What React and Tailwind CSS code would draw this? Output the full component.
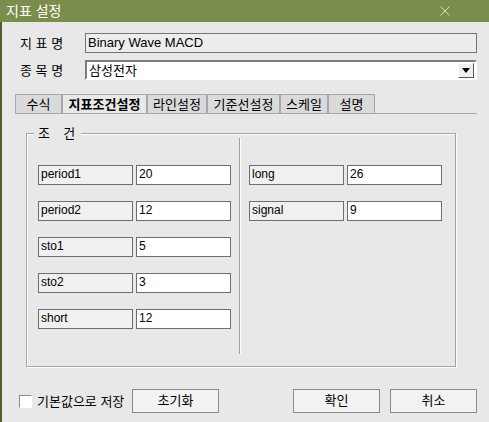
import React from "react";

const LEFT_FIELDS = [
  ["period1", "20"],
  ["period2", "12"],
  ["sto1", "5"],
  ["sto2", "3"],
  ["short", "12"],
];

const RIGHT_FIELDS = [
  ["long", "26"],
  ["signal", "9"],
];

const TABS = [
  { label: "수식", w: "w-[47px]" },
  { label: "지표조건설정", w: "w-[85px]", active: true },
  { label: "라인설정", w: "w-[60px]" },
  { label: "기준선설정", w: "w-[73px]" },
  { label: "스케일", w: "w-[48px]" },
  { label: "설명", w: "w-[47px]" },
];

function Field({ label, value }) {
  return (
    <div className="flex h-[20px] gap-[3px]">
      <div className="h-full w-[95px] border border-[#6e6e6e] bg-[#f0f0f0] px-[2px] text-[12px] leading-[17px] text-black">
        {label}
      </div>
      <div className="h-full w-[95px] border border-[#6e6e6e] bg-white px-[2px] text-[12px] leading-[17px] text-black">
        {value}
      </div>
    </div>
  );
}

function Button({ children, className = "" }) {
  return (
    <button
      className={`h-[24px] w-[87px] border border-[#8a8a8a] bg-[#f2f2f2] text-[13px] text-black ${className}`}
    >
      {children}
    </button>
  );
}

export default function App() {
  return (
    <div className="flex h-[422px] w-[489px] flex-col overflow-hidden bg-[#e8e8e8] font-['Liberation_Sans','Noto_Sans_CJK_KR',sans-serif] text-black">
      {/* title bar */}
      <div className="flex h-[22px] shrink-0 items-center justify-between bg-[#7a8d4b] pl-[6px] pr-[39px]">
        <span className="text-[14px] leading-none text-white">지표 설정</span>
        <svg width="10" height="10" viewBox="0 0 10 10">
          <path d="M0.5 0.5 L9.5 9.5 M9.5 0.5 L0.5 9.5" stroke="#d8dfc8" strokeWidth="1" />
        </svg>
      </div>

      <div className="flex flex-1 flex-col border-l-2 border-[#4e5f2a]">
        {/* 지표명 */}
        <div className="mt-[11px] flex h-[20px] items-center">
          <div className="w-[83px] pl-[18px] text-[13px] leading-none">지 표 명</div>
          <div className="h-full w-[392px] border border-[#747474] bg-[#ededed] px-[2px] text-[13px] leading-[17px]">
            Binary Wave MACD
          </div>
        </div>

        {/* 종목명 */}
        <div className="mt-[7px] flex h-[20px] items-center">
          <div className="w-[83px] pl-[18px] text-[13px] leading-none">종 목 명</div>
          <div className="flex h-full w-[392px] items-center justify-between border-2 border-t-[#7c7c7c] border-l-[#7c7c7c] border-r-[#ffffff] border-b-[#ffffff] bg-white pl-[2px] pr-[1px]">
            <span className="text-[13px] leading-none">삼성전자</span>
            <div className="flex h-[15px] w-[16px] items-center justify-center border border-t-[#fff] border-l-[#fff] border-r-[#555] border-b-[#555] bg-[#f0f0f0]">
              <svg width="8" height="5" viewBox="0 0 8 5">
                <path d="M0 0 H8 L4 5 Z" fill="#000" />
              </svg>
            </div>
          </div>
        </div>

        {/* tabs */}
        <div className="ml-[13px] mt-[14px] flex w-[462px] border-b border-[#a8a8a8]">
          {TABS.map((t) => (
            <div
              key={t.label}
              className={`flex h-[19px] items-center justify-center border-l border-r border-t border-[#a8a8a8] text-[13px] leading-none ${t.w} ${
                t.active ? "bg-[#e8e8e8] font-bold" : "bg-[#dadada]"
              }`}
            >
              {t.label}
            </div>
          ))}
        </div>

        {/* group box */}
        <div className="relative ml-[24px] mt-[19px] flex h-[234px] w-[430px] border border-[#a4a4a4] shadow-[inset_1px_1px_0_#fff,1px_1px_0_#fff]">
          <div className="absolute left-[7px] top-[-8px] whitespace-pre bg-[#e8e8e8] px-[4px] text-[13px] leading-[15px] tracking-[2px]">
            조  건
          </div>
          <div className="ml-[11px] flex flex-col gap-[16px] pt-[31px]">
            {LEFT_FIELDS.map(([l, v]) => (
              <Field key={l} label={l} value={v} />
            ))}
          </div>
          <div className="ml-[8px] mt-[4px] h-[216px] w-[2px] border-l border-r border-l-[#a0a0a0] border-r-white" />
          <div className="ml-[8px] flex flex-col gap-[16px] pt-[31px]">
            {RIGHT_FIELDS.map(([l, v]) => (
              <Field key={l} label={l} value={v} />
            ))}
          </div>
        </div>

        {/* bottom row */}
        <div className="mt-[22px] flex h-[24px] items-center">
          <div className="flex w-[130px] items-center pl-[17px]">
            <div className="h-[13px] w-[13px] border border-t-[#8a8a8a] border-l-[#8a8a8a] border-r-white border-b-white bg-white" />
            <span className="ml-[5px] text-[13px] leading-none">기본값으로 저장</span>
          </div>
          <Button>초기화</Button>
          <Button className="ml-[74px]">확인</Button>
          <Button className="ml-[10px]">취소</Button>
        </div>
      </div>
    </div>
  );
}
